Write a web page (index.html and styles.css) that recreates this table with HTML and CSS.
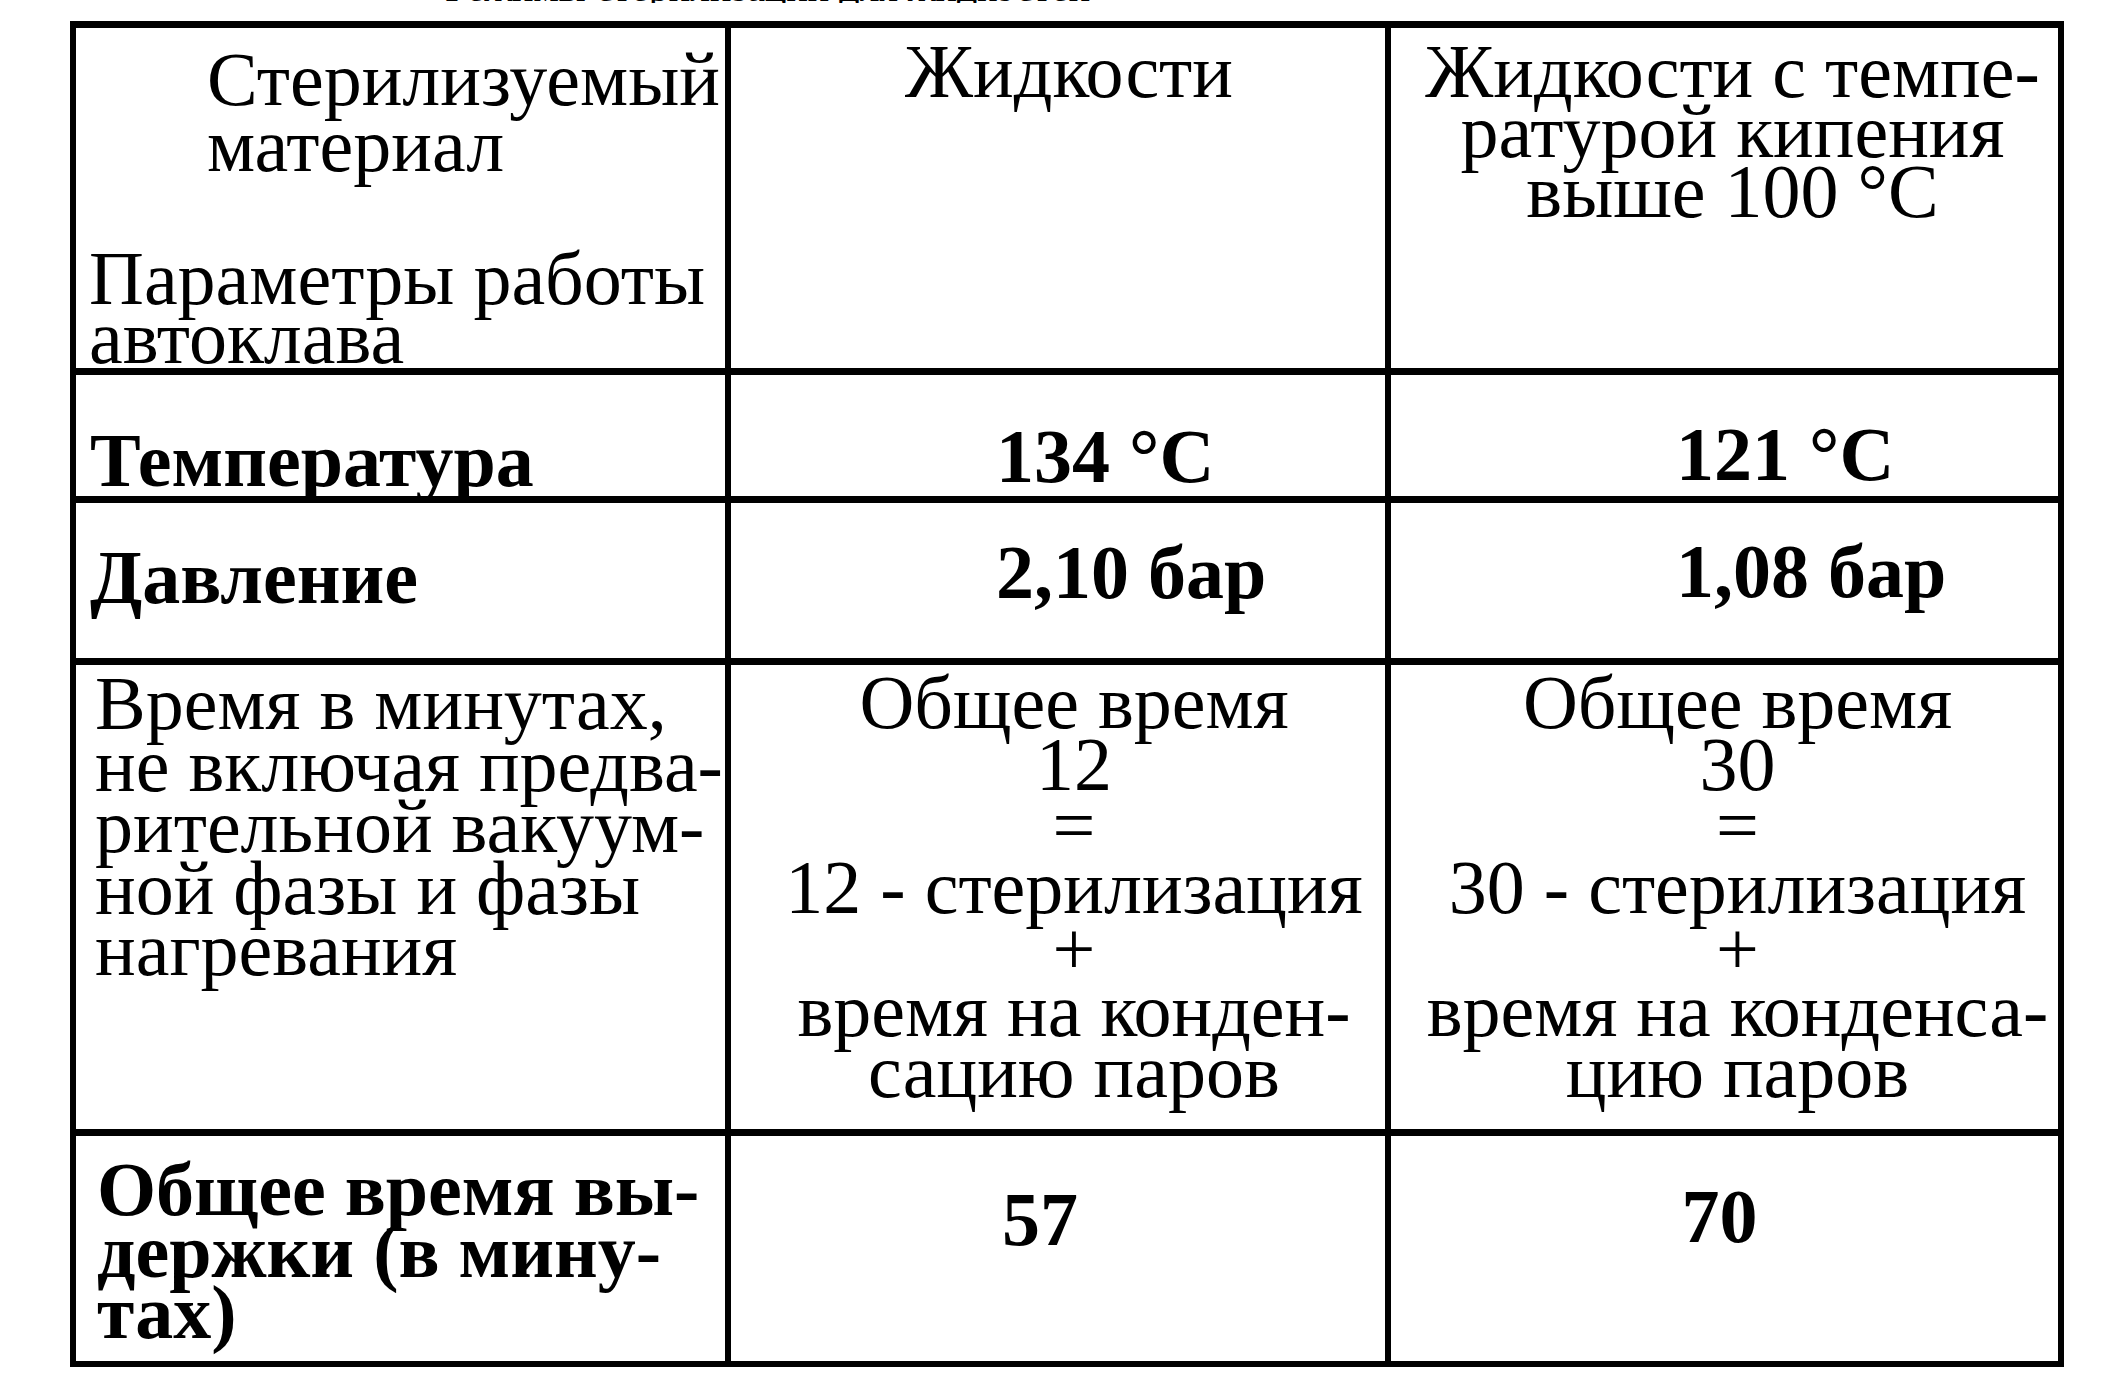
FILE: index.html
```html
<!DOCTYPE html>
<html lang="ru">
<head>
<meta charset="utf-8">
<title>Параметры работы автоклава</title>
<link rel="stylesheet" href="styles.css">
</head>
<body>
<div class="caption"><span>Режимы стерилизации для жидкостей</span></div>
<div class="sheet">
  <div class="cell head-param">
    <div class="hp-top">Стерилизуемый<br>материал</div>
    <div class="hp-bottom">Параметры работы<br>автоклава</div>
  </div>
  <div class="cell head-c2">Жидкости</div>
  <div class="cell head-c3">Жидкости с темпе-<br>ратурой кипения<br>выше 100 °C</div>

  <div class="cell bold r2-label">Температура</div>
  <div class="cell bold r2-v2">134 °C</div>
  <div class="cell bold r2-v3">121 °C</div>

  <div class="cell bold r3-label">Давление</div>
  <div class="cell bold r3-v2">2,10 бар</div>
  <div class="cell bold r3-v3">1,08 бар</div>

  <div class="cell r4-label">Время в минутах,<br>не включая предва-<br>рительной вакуум-<br>ной фазы и фазы<br>нагревания</div>
  <div class="cell r4-v2">Общее время<br>12<br>=<br>12 - стерилизация<br>+<br>время на конден-<br>сацию паров</div>
  <div class="cell r4-v3">Общее время<br>30<br>=<br>30 - стерилизация<br>+<br>время на конденса-<br>цию паров</div>

  <div class="cell bold r5-label">Общее время вы-<br>держки (в мину-<br>тах)</div>
  <div class="cell bold r5-v2">57</div>
  <div class="cell bold r5-v3">70</div>
</div>
</body>
</html>
```

FILE: styles.css
```css
html, body {
  margin: 0;
  padding: 0;
  background: #ffffff;
}

body {
  font-family: "Liberation Serif", "Times New Roman", serif;
  color: #000000;
}

.caption {
  height: 3px;
  overflow: hidden;
  padding-left: 445px;
}

.caption span {
  display: block;
  margin-top: -32px;
  font-size: 40px;
  line-height: 40px;
  white-space: nowrap;
}

.sheet {
  margin: 18px 0 0 70px;
  width: max-content;
  display: grid;
  grid-template-columns: 649px 654px 667px;
  grid-template-rows: 340px 121px 155px 464px 225px;
  gap: 7px 6px;
  padding: 7px 6px 6px 6px;
  background: #000000;
}

.cell {
  background: #ffffff;
  font-size: 76px;
  line-height: 62px;
  white-space: nowrap;
  box-sizing: border-box;
}

.bold {
  font-weight: 700;
}

/* header row */
.head-param {
  display: flex;
  flex-direction: column;
  justify-content: space-between;
  padding: 18px 0 1px 13px;
}

.hp-top {
  margin-left: 118px;
  line-height: 66px;
}

.hp-bottom {
  line-height: 59px;
}

.head-c2 {
  text-align: center;
  padding: 12px 0 0 22px;
}

.head-c3 {
  text-align: center;
  line-height: 60px;
  padding: 13px 0 0 16px;
}

/* temperature row */
.r2-label {
  padding: 54px 0 0 14px;
}

.r2-v2 {
  padding: 50px 0 0 265px;
}

.r2-v3 {
  padding: 48px 0 0 285px;
}

/* pressure row */
.r3-label {
  padding: 43px 0 0 14px;
}

.r3-v2 {
  padding: 38px 0 0 265px;
}

.r3-v3 {
  padding: 37px 0 0 285px;
}

/* time row */
.r4-label {
  line-height: 61.5px;
  padding: 8px 0 0 19px;
}

.r4-v2 {
  text-align: center;
  line-height: 61.5px;
  padding: 7px 0 0 32px;
}

.r4-v3 {
  text-align: center;
  line-height: 61.5px;
  padding: 7px 0 0 26px;
}

/* total row */
.r5-label {
  line-height: 61.5px;
  padding: 23px 0 0 21px;
}

.r5-v2 {
  text-align: center;
  padding: 52px 36px 0 0;
}

.r5-v3 {
  text-align: center;
  padding: 49px 10px 0 0;
}
```
